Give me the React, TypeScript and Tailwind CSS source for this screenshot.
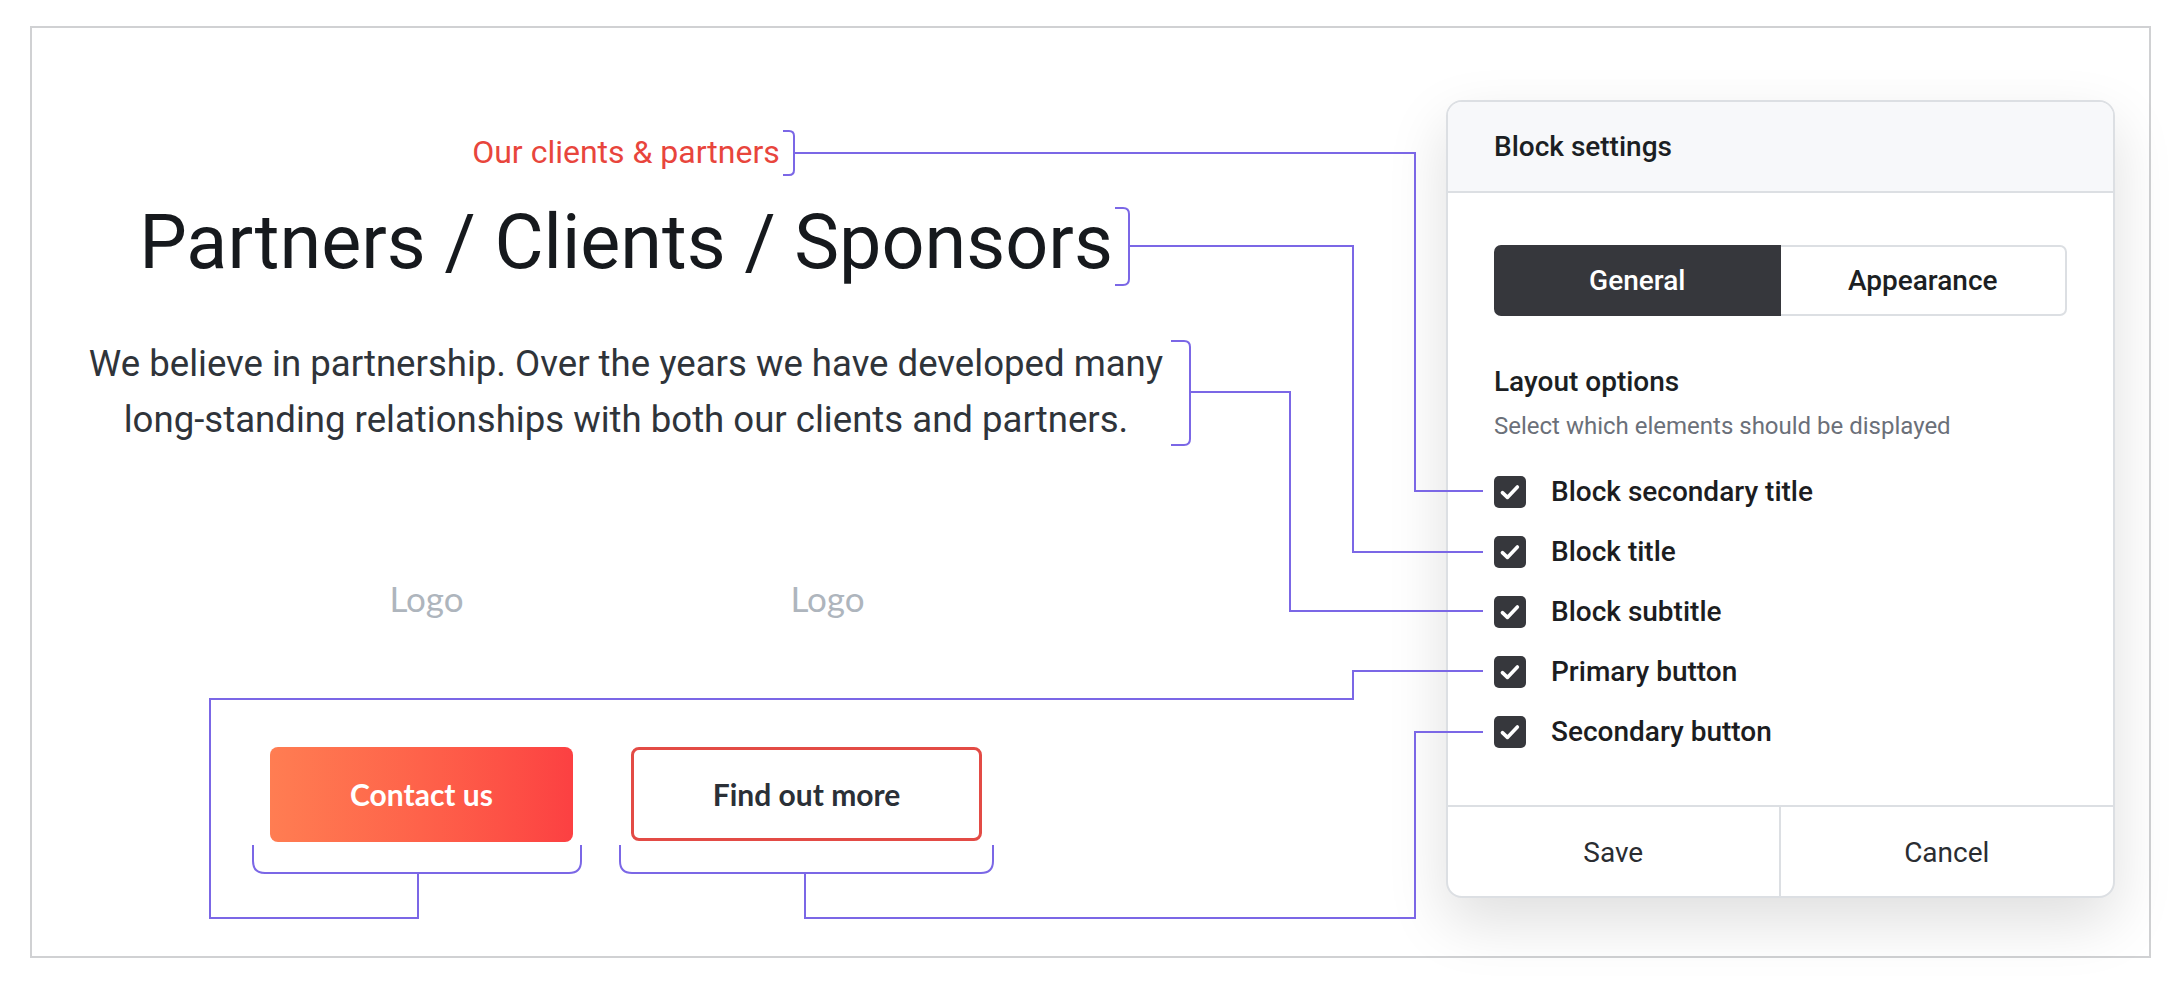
import React from 'react';

const OPTIONS = [
  'Block secondary title',
  'Block title',
  'Block subtitle',
  'Primary button',
  'Secondary button',
];

// annotation lines that tie each block part to its checkbox
const Annotations = () => (
  <svg
    className="absolute inset-0 pointer-events-none"
    width="2180"
    height="986"
    viewBox="0 0 2180 986"
    fill="none"
    stroke="#7b67e6"
    strokeWidth="2"
  >
    {/* secondary title */}
    <path d="M783 131 H789 Q794 131 794 136 V170 Q794 175 789 175 H783" />
    <path d="M794 153 H1415 V491 H1483" />
    {/* title */}
    <path d="M1115 208 H1123 Q1129 208 1129 214 V279 Q1129 285 1123 285 H1115" />
    <path d="M1129 246 H1353 V552 H1483" />
    {/* subtitle */}
    <path d="M1171 341 H1184 Q1190 341 1190 347 V439 Q1190 445 1184 445 H1171" />
    <path d="M1190 392 H1290 V611 H1483" />
    {/* primary button */}
    <path d="M253 845 V861 Q253 873 265 873 H569 Q581 873 581 861 V845" />
    <path d="M418 873 V918 H210 V699 H1353 V671 H1483" />
    {/* secondary button */}
    <path d="M620 845 V861 Q620 873 632 873 H981 Q993 873 993 861 V845" />
    <path d="M805 873 V918 H1415 V732 H1483" />
  </svg>
);

const CheckBox = () => (
  <div className="w-[32px] h-[32px] rounded-[5px] bg-[#36373c] flex items-center justify-center shrink-0">
    <svg width="26" height="26" viewBox="0 0 24 24" fill="none">
      <polyline points="5 12.6 9.6 17 18.8 7.4" stroke="#fff" strokeWidth="3.3" strokeLinecap="round" strokeLinejoin="round" />
    </svg>
  </div>
);

const BlockPreview = () => (
  <div className="w-[1188px] flex flex-col items-center pt-[104px] font-['Roboto',sans-serif]">
    <p className="text-[32px] leading-[40px] text-[#e8453c]">Our clients &amp; partners</p>
    <h1 className="mt-[22px] text-[75.5px] leading-[96px] text-[#16191d] whitespace-nowrap">
      Partners / Clients / Sponsors
    </h1>
    <p className="mt-[46px] text-[36.6px] leading-[56px] text-[#2f343a] text-center whitespace-nowrap">
      We believe in partnership. Over the years we have developed many
      <br />
      long-standing relationships with both our clients and partners.
    </p>

    <div className="self-stretch mt-[126px] pl-[194px] flex font-['Lato',sans-serif]">
      <div className="w-[401px] text-center text-[35px] leading-[48px] text-[#aeb5bd]">Logo</div>
      <div className="w-[401px] text-center text-[35px] leading-[48px] text-[#aeb5bd]">Logo</div>
    </div>

    <div className="self-stretch mt-[125px] pl-[238px] flex gap-[58px] font-['Lato',sans-serif]">
      <button className="w-[303px] h-[95px] rounded-[8px] bg-linear-to-r from-[#ff7d52] to-[#fc4042] text-white text-[30px] font-bold">
        Contact us
      </button>
      <button className="w-[351px] h-[94px] rounded-[8px] border-[3px] border-[#e34b45] bg-white text-[#2b3037] text-[30px] font-bold">
        Find out more
      </button>
    </div>
  </div>
);

const SettingsPanel = () => (
  <div className="ml-[226px] mt-[72px] w-[669px] h-[798px] rounded-[16px] border-2 border-[#dcdfe3] bg-white shadow-[0_24px_60px_rgba(0,0,0,0.13)] flex flex-col overflow-hidden font-['Roboto',sans-serif]">
    <div className="h-[91px] shrink-0 bg-[#f7f8fa] border-b-2 border-[#dcdfe3] px-[46px] flex items-center">
      <span className="text-[28px] font-medium text-[#1c1f23]">Block settings</span>
    </div>

    <div className="flex-1 px-[46px] pt-[52px]">
      <div className="grid grid-cols-2 h-[71px] text-[28px] font-medium">
        <div className="rounded-l-[7px] bg-[#36373c] text-white flex items-center justify-center">General</div>
        <div className="rounded-r-[7px] border-2 border-l-0 border-[#dcdfe3] text-[#1c1f23] flex items-center justify-center">
          Appearance
        </div>
      </div>

      <h2 className="mt-[49px] text-[28px] leading-[34px] font-medium text-[#1c1f23]">Layout options</h2>
      <p className="mt-[12px] text-[24px] leading-[30px] text-[#6b7079]">Select which elements should be displayed</p>

      <div className="mt-[35px] flex flex-col gap-[28px]">
        {OPTIONS.map((opt) => (
          <label key={opt} className="flex items-center gap-[25px] h-[32px]">
            <CheckBox />
            <span className="text-[28px] font-medium text-[#1c1d21]">{opt}</span>
          </label>
        ))}
      </div>
    </div>

    <div className="h-[91px] shrink-0 border-t-2 border-[#dcdfe3] grid grid-cols-2 text-[28px] text-[#2a2d32]">
      <button className="border-r-2 border-[#dcdfe3] flex items-center justify-center pt-[3px]">Save</button>
      <button className="flex items-center justify-center pt-[3px]">Cancel</button>
    </div>
  </div>
);

export default function App() {
  return (
    <div className="relative w-[2180px] h-[986px] bg-white pt-[26px] pl-[30px]">
      <div className="w-[2121px] h-[932px] border-2 border-[#d0d1d3] flex items-start">
        <BlockPreview />
        <SettingsPanel />
      </div>
      <Annotations />
    </div>
  );
}
